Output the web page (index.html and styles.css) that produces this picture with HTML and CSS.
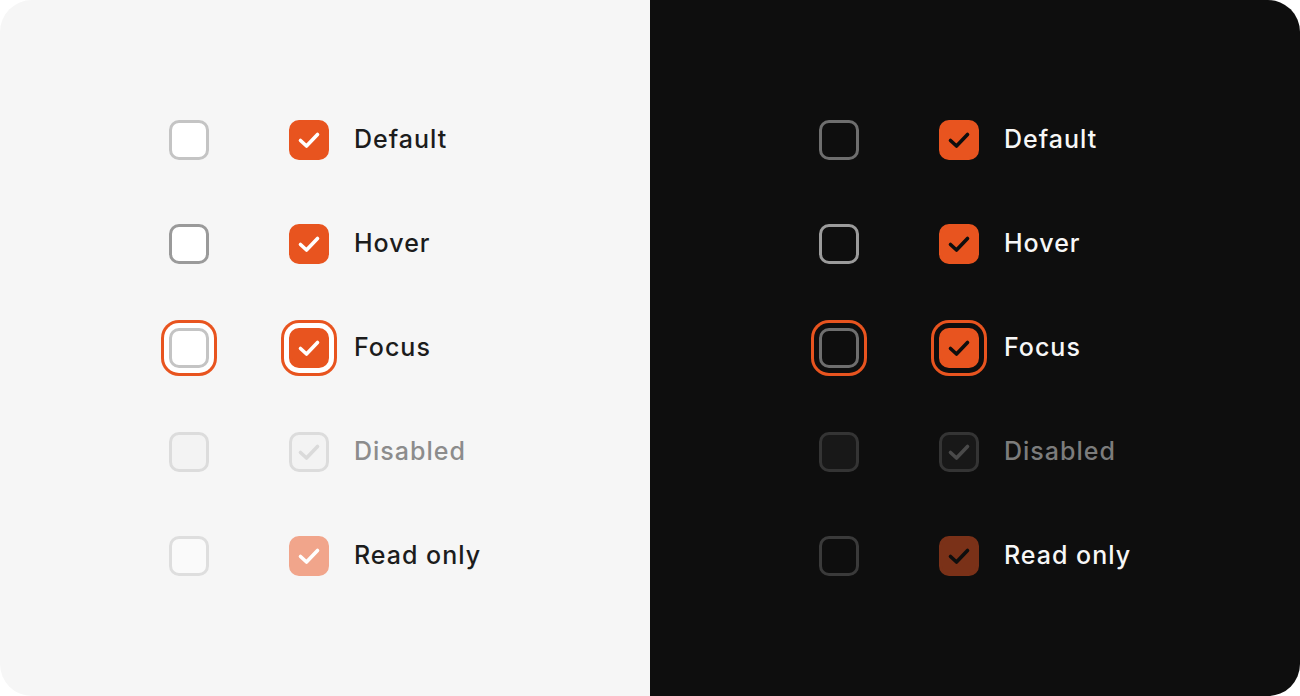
FILE: index.html
```html
<!DOCTYPE html>
<html>
<head>
<meta charset="utf-8">
<link rel="stylesheet" href="styles.css">
</head>
<body>
<svg width="0" height="0" style="position:absolute">
  <symbol id="chk" viewBox="0 0 40 40"><path d="M11.5 20.5 L17.5 26 L28.5 14.5" fill="none" stroke-width="3.6" stroke-linecap="round" stroke-linejoin="round"/></symbol>
</svg>
<div class="frame">
  <section class="panel light">
    <div class="grid">
      <span class="box"></span><span class="box on"><svg><use href="#chk"/></svg></span><span class="label">Default</span>
      <span class="box hover"></span><span class="box on"><svg><use href="#chk"/></svg></span><span class="label">Hover</span>
      <span class="box focus"></span><span class="box on focus"><svg><use href="#chk"/></svg></span><span class="label">Focus</span>
      <span class="box disabled"></span><span class="box disabled"><svg><use href="#chk"/></svg></span><span class="label dim">Disabled</span>
      <span class="box readonly"></span><span class="box on readonly"><svg><use href="#chk"/></svg></span><span class="label">Read only</span>
    </div>
  </section>
  <section class="panel dark">
    <div class="grid">
      <span class="box"></span><span class="box on"><svg><use href="#chk"/></svg></span><span class="label">Default</span>
      <span class="box hover"></span><span class="box on"><svg><use href="#chk"/></svg></span><span class="label">Hover</span>
      <span class="box focus"></span><span class="box on focus"><svg><use href="#chk"/></svg></span><span class="label">Focus</span>
      <span class="box disabled"></span><span class="box disabled"><svg><use href="#chk"/></svg></span><span class="label dim">Disabled</span>
      <span class="box readonly"></span><span class="box on readonly"><svg><use href="#chk"/></svg></span><span class="label">Read only</span>
    </div>
  </section>
</div>
</body>
</html>
```
FILE: styles.css
```css
html, body { margin: 0; padding: 0; background: #ffffff; }
body { width: 1300px; height: 696px; overflow: hidden; }
.frame {
  width: 1300px; height: 696px; box-sizing: border-box;
  border-radius: 32px; overflow: hidden;
  display: flex;
}
.panel {
  flex: 1 1 0;
  display: flex; align-items: center;
  padding-left: 169px;
  box-sizing: border-box;
}
.light { background: #f6f6f6; }
.dark { background: #0e0e0e; }
.grid {
  display: grid;
  grid-template-columns: 40px 40px auto;
  column-gap: 80px;
  row-gap: 64px;
  align-items: center;
}
.grid .label { margin-left: -55px; }
.box {
  width: 40px; height: 40px; box-sizing: border-box;
  border-radius: 10px;
  border: 3px solid #c4c4c4;
  background: #ffffff;
  display: flex; align-items: center; justify-content: center;
}
.box svg { width: 40px; height: 40px; flex: none; margin: -3px; }
.label {
  font-family: "Inter", "Lato", sans-serif;
  font-size: 25px; font-weight: 500; letter-spacing: 1px;
  color: #1c1c1c;
  line-height: 40px;
  position: relative; top: -1px;
}
.label.dim { color: #8c8c8c; }

/* light */
.light .box.hover { border-color: #9a9a9a; }
.light .box.on { background: #e8541f; border-color: #e8541f; }
.light .box.on svg { stroke: #ffffff; }
.light .box.focus { box-shadow: 0 0 0 5px #ffffff, 0 0 0 8px #e8541f; }
.light .box.disabled { border-color: #dcdcdc; background: #f3f3f3; }
.light .box.disabled svg { stroke: #dadada; }
.light .box.readonly { border-color: #dedede; background: #fafafa; }
.light .box.on.readonly { background: #f1a58b; border-color: #f1a58b; }

/* dark */
.dark .label { color: #f7f7f7; }
.dark .label.dim { color: #7c7c7c; }
.dark .box { background: #0e0e0e; border-color: #6e6e6e; }
.dark .box.hover { border-color: #9b9b9b; }
.dark .box.on { background: #e8541f; border-color: #e8541f; }
.dark .box.on svg { stroke: #0e0e0e; }
.dark .box.focus { box-shadow: 0 0 0 5px #0e0e0e, 0 0 0 8px #e8541f; }
.dark .box.disabled { border-color: #343434; background: #181818; }
.dark .box.disabled svg { stroke: #4a4a4a; }
.dark .box.readonly { border-color: #3a3a3a; background: #0e0e0e; }
.dark .box.on.readonly { background: #7a3118; border-color: #7a3118; }
```
